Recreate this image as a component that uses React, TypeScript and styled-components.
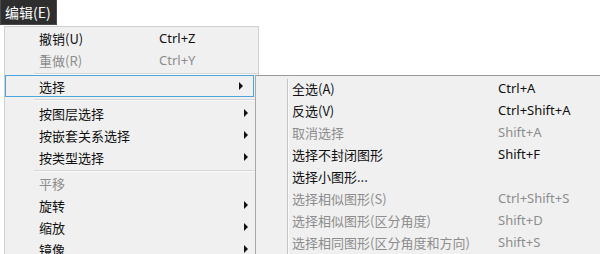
import React from "react";
import styled, { createGlobalStyle } from "styled-components";

const Global = createGlobalStyle`
  html, body { margin: 0; padding: 0; background: #ffffff; }
  body { font-family: "Noto Sans CJK SC", "Noto Sans", sans-serif; }
  #root { width: 600px; height: 254px; overflow: hidden; }
`;

const Page = styled.div`
  position: relative;
  width: 600px;
  height: 254px;
  overflow: hidden;
  background: #ffffff;
`;

const MenuBarItem = styled.div`
  width: 57px;
  height: 25px;
  box-sizing: border-box;
  background: #2e2e2e;
  border: 1px solid #4a4a4a;
  border-top: none;
  color: #ffffff;
  font-size: 14px;
  line-height: 24px;
  padding-left: 4px;
  white-space: nowrap;
`;

const MainMenu = styled.div`
  margin: 1px 0 0 4px;
  width: 255px;
  height: 240px;
  box-sizing: border-box;
  background: #f0f0f0;
  border: 1px solid #d0d0d0;
  border-bottom: none;
  padding-top: 0;
`;

const Row = styled.div<{ $disabled?: boolean; $active?: boolean; $pad: number; $short: number }>`
  display: grid;
  grid-template-columns: ${(p) => p.$short}px 1fr 14px;
  align-items: center;
  height: 22px;
  box-sizing: border-box;
  padding-left: ${(p) => (p.$active ? p.$pad - 1 : p.$pad)}px;
  margin: ${(p) => (p.$active ? "0 4px 0 0" : "0")};
  border: ${(p) => (p.$active ? "1px solid #4ba4dc" : "none")};
  color: ${(p) => (p.$disabled ? "#8d8d8d" : "#111111")};
  font-size: 13px;
  white-space: nowrap;
`;

const Label = styled.span``;
const Shortcut = styled.span`
  font-family: "Noto Sans", sans-serif;
  font-size: 13px;
`;

const Arrow = styled.span`
  width: 0;
  height: 0;
  border-top: 4px solid transparent;
  border-bottom: 4px solid transparent;
  border-left: 4px solid #111111;
`;

const Separator = styled.div<{ $h: number; $left: number }>`
  height: ${(p) => p.$h}px;
  display: flex;
  align-items: center;
  padding-left: ${(p) => p.$left}px;
  &::after {
    content: "";
    flex: 1;
    height: 1px;
    background: #d6d6d6;
    box-shadow: 0 1px 0 #fafafa;
  }
`;

const SubMenu = styled.div`
  position: absolute;
  left: 255px;
  top: 75px;
  width: 360px;
  height: 190px;
  box-sizing: border-box;
  background: #f0f0f0;
  border: 1px solid #a8a8a8;
  border-top-color: #9a9a9a;
  padding-top: 1px;
  &::before {
    content: "";
    position: absolute;
    left: 31px;
    top: 3px;
    bottom: 0;
    width: 1px;
    background: #c4c4c4;
    box-shadow: 1px 0 0 #fafafa;
  }
`;

type Item =
  | { sep: number }
  | { label: string; shortcut?: string; disabled?: boolean; sub?: boolean; active?: boolean };

const mainItems: Item[] = [
  { label: "撤销(U)", shortcut: "Ctrl+Z" },
  { label: "重做(R)", shortcut: "Ctrl+Y", disabled: true },
  { sep: 4 },
  { label: "选择", sub: true, active: true },
  { sep: 5 },
  { label: "按图层选择", sub: true },
  { label: "按嵌套关系选择", sub: true },
  { label: "按类型选择", sub: true },
  { sep: 4 },
  { label: "平移", disabled: true },
  { label: "旋转", sub: true },
  { label: "缩放", sub: true },
  { label: "镜像", sub: true },
];

const subItems: Item[] = [
  { label: "全选(A)", shortcut: "Ctrl+A" },
  { label: "反选(V)", shortcut: "Ctrl+Shift+A" },
  { label: "取消选择", shortcut: "Shift+A", disabled: true },
  { label: "选择不封闭图形", shortcut: "Shift+F" },
  { label: "选择小图形..." },
  { label: "选择相似图形(S)", shortcut: "Ctrl+Shift+S", disabled: true },
  { label: "选择相似图形(区分角度)", shortcut: "Shift+D", disabled: true },
  { label: "选择相同图形(区分角度和方向)", shortcut: "Shift+S", disabled: true },
];

function renderItems(items: Item[], pad: number, short: number, sepLeft: number) {
  return items.map((it, i) => {
    if ("sep" in it) return <Separator key={i} $h={it.sep} $left={sepLeft} />;
    return (
      <Row key={i} $disabled={it.disabled} $active={it.active} $pad={pad} $short={short}>
        <Label>{it.label}</Label>
        <Shortcut>{it.shortcut ?? ""}</Shortcut>
        {it.sub ? <Arrow /> : <span />}
      </Row>
    );
  });
}

export default function App() {
  return (
    <Page>
      <Global />
      <MenuBarItem>编辑(E)</MenuBarItem>
      <MainMenu>{renderItems(mainItems, 34, 120, 29)}</MainMenu>
      <SubMenu>{renderItems(subItems, 36, 206, 36)}</SubMenu>
    </Page>
  );
}
